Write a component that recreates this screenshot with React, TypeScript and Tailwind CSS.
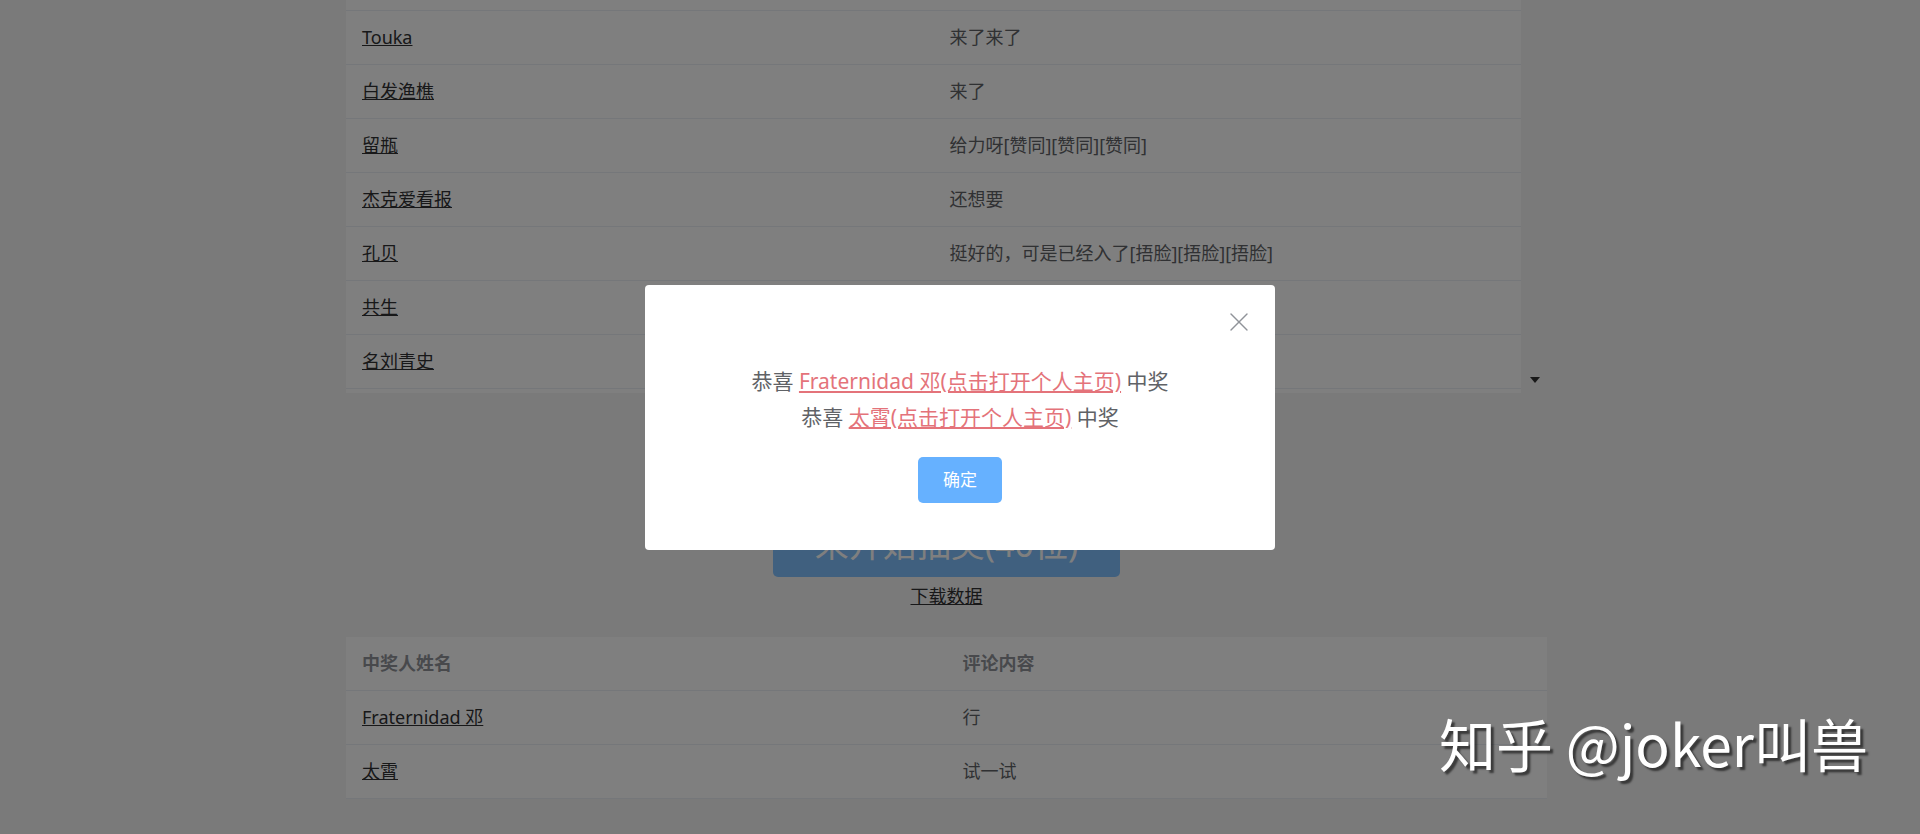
import React from 'react';
import { X } from 'lucide-react';

type Comment = { name: string; content: string };

// rows of the comment list, the list is scrolled down by one row
const COMMENTS: Comment[] = [
  { name: '小鱼儿', content: '冲冲冲' },
  { name: 'Touka', content: '来了来了' },
  { name: '白发渔樵', content: '来了' },
  { name: '留瓶', content: '给力呀[赞同][赞同][赞同]' },
  { name: '杰克爱看报', content: '还想要' },
  { name: '孔贝', content: '挺好的，可是已经入了[捂脸][捂脸][捂脸]' },
  { name: '共生', content: '来了' },
  { name: '名刘青史', content: '参与一下' },
  { name: '阿木', content: '试试' },
];

const WINNERS: Comment[] = [
  { name: 'Fraternidad 邓', content: '行' },
  { name: '太霄', content: '试一试' },
];

const Row: React.FC<{ item: Comment }> = ({ item }) => (
  <div className="flex h-[54px] border-b border-[#ebeef5] bg-white">
    <div className="w-1/2 px-4 flex items-center">
      <a className="underline text-[#303133] cursor-pointer">{item.name}</a>
    </div>
    <div className="w-1/2 px-4 flex items-center text-[#606266]">{item.content}</div>
  </div>
);

const App: React.FC = () => {
  return (
    <div className="relative w-full h-[834px] overflow-hidden bg-[#f4f4f4] text-[18px] font-['Noto_Sans','Noto_Sans_CJK_SC',sans-serif]">
      <div className="ml-[346px] w-[1201px] flex flex-col">
        {/* comment list */}
        <div className="flex h-[393px] overflow-hidden">
          <div className="w-[1175px] -mt-[43px]">
            {COMMENTS.map((c) => (
              <Row key={c.name} item={c} />
            ))}
          </div>
          <div className="flex-1 flex flex-col justify-end items-center pb-[10px] pl-[2px]">
            <svg width="10" height="6" viewBox="0 0 10 6">
              <polygon points="0,0 10,0 5,6" fill="#333" />
            </svg>
          </div>
        </div>

        <button className="mx-auto mt-[118px] w-[347px] h-[66px] rounded-[5px] bg-[#80c0ff] text-white text-[34px] leading-none">
          来开始抽奖(40位)
        </button>
        <a className="mx-auto mt-[6px] h-[26px] leading-[26px] underline text-[#303133] cursor-pointer">下载数据</a>

        {/* winners */}
        <div className="mt-[28px] bg-white">
          <div className="flex h-[54px] border-b border-[#ebeef5] font-bold text-[#909399]">
            <div className="w-1/2 px-4 flex items-center">中奖人姓名</div>
            <div className="w-1/2 px-4 flex items-center">评论内容</div>
          </div>
          {WINNERS.map((w) => (
            <Row key={w.name} item={w} />
          ))}
        </div>
      </div>

      {/* result dialog */}
      <div className="absolute inset-0 bg-black/50 flex items-center justify-center">
        <div className="relative w-[630px] h-[265px] bg-white rounded-[4px] flex flex-col items-center pt-[78px]">
          <button className="absolute top-[21px] right-[20px] text-[#909399]">
            <X size={32} strokeWidth={1} />
          </button>
          <div className="text-[21px] leading-[36px] text-[#606266] text-center">
            <p>
              恭喜 <a className="text-[#e4737a] underline cursor-pointer">Fraternidad 邓(点击打开个人主页)</a> 中奖
            </p>
            <p>
              恭喜 <a className="text-[#e4737a] underline cursor-pointer">太霄(点击打开个人主页)</a> 中奖
            </p>
          </div>
          <button className="mt-[22px] w-[84px] h-[46px] rounded-[5px] bg-[#66b1ff] text-white text-[17px]">确定</button>
        </div>
      </div>

      <div className="absolute left-[1439px] top-[700px] text-white text-[57px] font-normal font-['Noto_Sans_CJK_SC',sans-serif] [text-shadow:3px_3px_2px_rgba(0,0,0,0.55)] whitespace-nowrap">
        知乎 @joker叫兽
      </div>
    </div>
  );
};

export default App;
